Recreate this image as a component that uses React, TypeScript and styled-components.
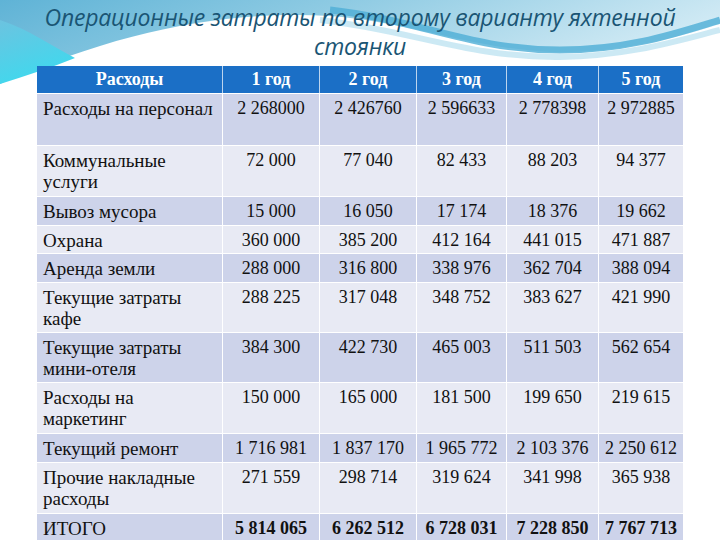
import React from "react";
import styled, { createGlobalStyle } from "styled-components";

const GlobalStyle = createGlobalStyle`
  html, body {
    margin: 0;
    padding: 0;
    background: #ffffff;
  }
  * {
    box-sizing: border-box;
  }
`;

type Row = {
  name: string;
  values: string[];
  height: number;
  total?: boolean;
};

const years = ["1 год", "2 год", "3 год", "4 год", "5 год"];

// line breaks in names follow the slide
const rows: Row[] = [
  { name: "Расходы на персонал", values: ["2 268000", "2 426760", "2 596633", "2 778398", "2 972885"], height: 52 },
  { name: "Коммунальные\nуслуги", values: ["72 000", "77 040", "82 433", "88 203", "94 377"], height: 51 },
  { name: "Вывоз мусора", values: ["15 000", "16 050", "17 174", "18 376", "19 662"], height: 29 },
  { name: "Охрана", values: ["360 000", "385 200", "412 164", "441 015", "471 887"], height: 28 },
  { name: "Аренда земли", values: ["288 000", "316 800", "338 976", "362 704", "388 094"], height: 29 },
  { name: "Текущие затраты\nкафе", values: ["288 225", "317 048", "348 752", "383 627", "421 990"], height: 50 },
  { name: "Текущие затраты\nмини-отеля", values: ["384 300", "422 730", "465 003", "511 503", "562 654"], height: 50 },
  { name: "Расходы на\nмаркетинг", values: ["150 000", "165 000", "181 500", "199 650", "219 615"], height: 51 },
  { name: "Текущий ремонт", values: ["1 716 981", "1 837 170", "1 965 772", "2 103 376", "2 250 612"], height: 29 },
  { name: "Прочие накладные\nрасходы", values: ["271 559", "298 714", "319 624", "341 998", "365 938"], height: 51 },
  { name: "ИТОГО", values: ["5 814 065", "6 262 512", "6 728 031", "7 228 850", "7 767 713"], height: 30, total: true },
];

const COLS = "186px 97px 97px 90px 92px 84px";

const Slide = styled.div`
  position: relative;
  width: 720px;
  height: 540px;
  overflow: hidden;
  background: #ffffff;
`;

const Backdrop = styled.svg`
  position: absolute;
  left: 0;
  top: 0;
  width: 720px;
  height: 540px;
  z-index: 0;
`;

const Content = styled.div`
  position: relative;
  z-index: 1;
  display: flex;
  flex-direction: column;
  align-items: flex-start;
`;

const Title = styled.h1`
  margin: 0;
  width: 720px;
  padding-top: 3px;
  height: 66px;
  text-align: center;
  font-family: "Open Sans", "DejaVu Sans", sans-serif;
  font-style: italic;
  font-weight: 400;
  font-size: 23px;
  line-height: 29px;
  letter-spacing: -0.2px;
  color: #1a5574;
`;

const Table = styled.div`
  margin-left: 37px;
  width: 646px;
  display: flex;
  flex-direction: column;
  font-family: "Liberation Serif", "Times New Roman", serif;
  color: #111;
`;

const HeadRow = styled.div`
  display: grid;
  grid-template-columns: ${COLS};
  height: 27px;
  background: #1b6fc6;
`;

const HeadCell = styled.div`
  display: flex;
  align-items: center;
  justify-content: center;
  color: #ffffff;
  font-weight: 700;
  font-size: 18px;
  border-right: 1px solid rgba(255, 255, 255, 0.7);
  &:last-child {
    border-right: none;
  }
`;

const BodyRow = styled.div<{ $h: number; $dark: boolean }>`
  display: grid;
  grid-template-columns: ${COLS};
  height: ${(p) => p.$h}px;
  background: ${(p) => (p.$dark ? "#cdd3ea" : "#e8eaf4")};
  border-top: 1px solid #ffffff;
`;

const NameCell = styled.div`
  padding: 4px 6px 0 6px;
  font-size: 19px;
  line-height: 21px;
  white-space: pre-line;
  border-right: 1px solid #ffffff;
`;

const NumCell = styled.div<{ $bold?: boolean }>`
  padding: 4px 2px 0 2px;
  font-size: 18px;
  line-height: 21px;
  text-align: center;
  white-space: nowrap;
  font-weight: ${(p) => (p.$bold ? 700 : 400)};
  border-right: 1px solid #ffffff;
  &:last-child {
    border-right: none;
  }
`;

export default function App() {
  return (
    <>
      <GlobalStyle />
      <Slide>
        <Backdrop viewBox="0 0 720 540">
          <defs>
            <linearGradient id="sky" x1="0" y1="0" x2="1" y2="0.3">
              <stop offset="0" stopColor="#5fb3d6" />
              <stop offset="0.45" stopColor="#8fcbe3" />
              <stop offset="1" stopColor="#d3ebf5" />
            </linearGradient>
            <linearGradient id="aqua" x1="0" y1="0" x2="0.4" y2="1">
              <stop offset="0" stopColor="#6cc3e0" />
              <stop offset="1" stopColor="#3fd9ee" />
            </linearGradient>
          </defs>
          <path
            d="M0 0 H720 V24 C670 40 610 54 550 52 C470 48 410 22 330 16 C230 10 120 30 0 84 Z"
            fill="url(#sky)"
          />
          <path d="M0 20 C30 30 50 45 75 58 C50 68 25 76 0 84 Z" fill="url(#aqua)" />
          <path
            d="M330 10 C420 20 470 50 560 50 C630 50 680 32 720 20"
            fill="none"
            stroke="#4eaed6"
            strokeWidth="7"
            opacity="0.8"
          />
          <path
            d="M320 20 C410 30 470 58 560 57 C630 56 680 40 720 30"
            fill="none"
            stroke="#bfe3f1"
            strokeWidth="6"
            opacity="0.8"
          />
        </Backdrop>
        <Content>
          <Title>
            Операционные затраты по второму варианту яхтенной
            <br />
            стоянки
          </Title>
          <Table>
            <HeadRow>
              <HeadCell>Расходы</HeadCell>
              {years.map((y) => (
                <HeadCell key={y}>{y}</HeadCell>
              ))}
            </HeadRow>
            {rows.map((r, i) => (
              <BodyRow key={r.name} $h={r.height} $dark={i % 2 === 0}>
                <NameCell>{r.name}</NameCell>
                {r.values.map((v, j) => (
                  <NumCell key={j} $bold={r.total}>
                    {v}
                  </NumCell>
                ))}
              </BodyRow>
            ))}
          </Table>
        </Content>
      </Slide>
    </>
  );
}
